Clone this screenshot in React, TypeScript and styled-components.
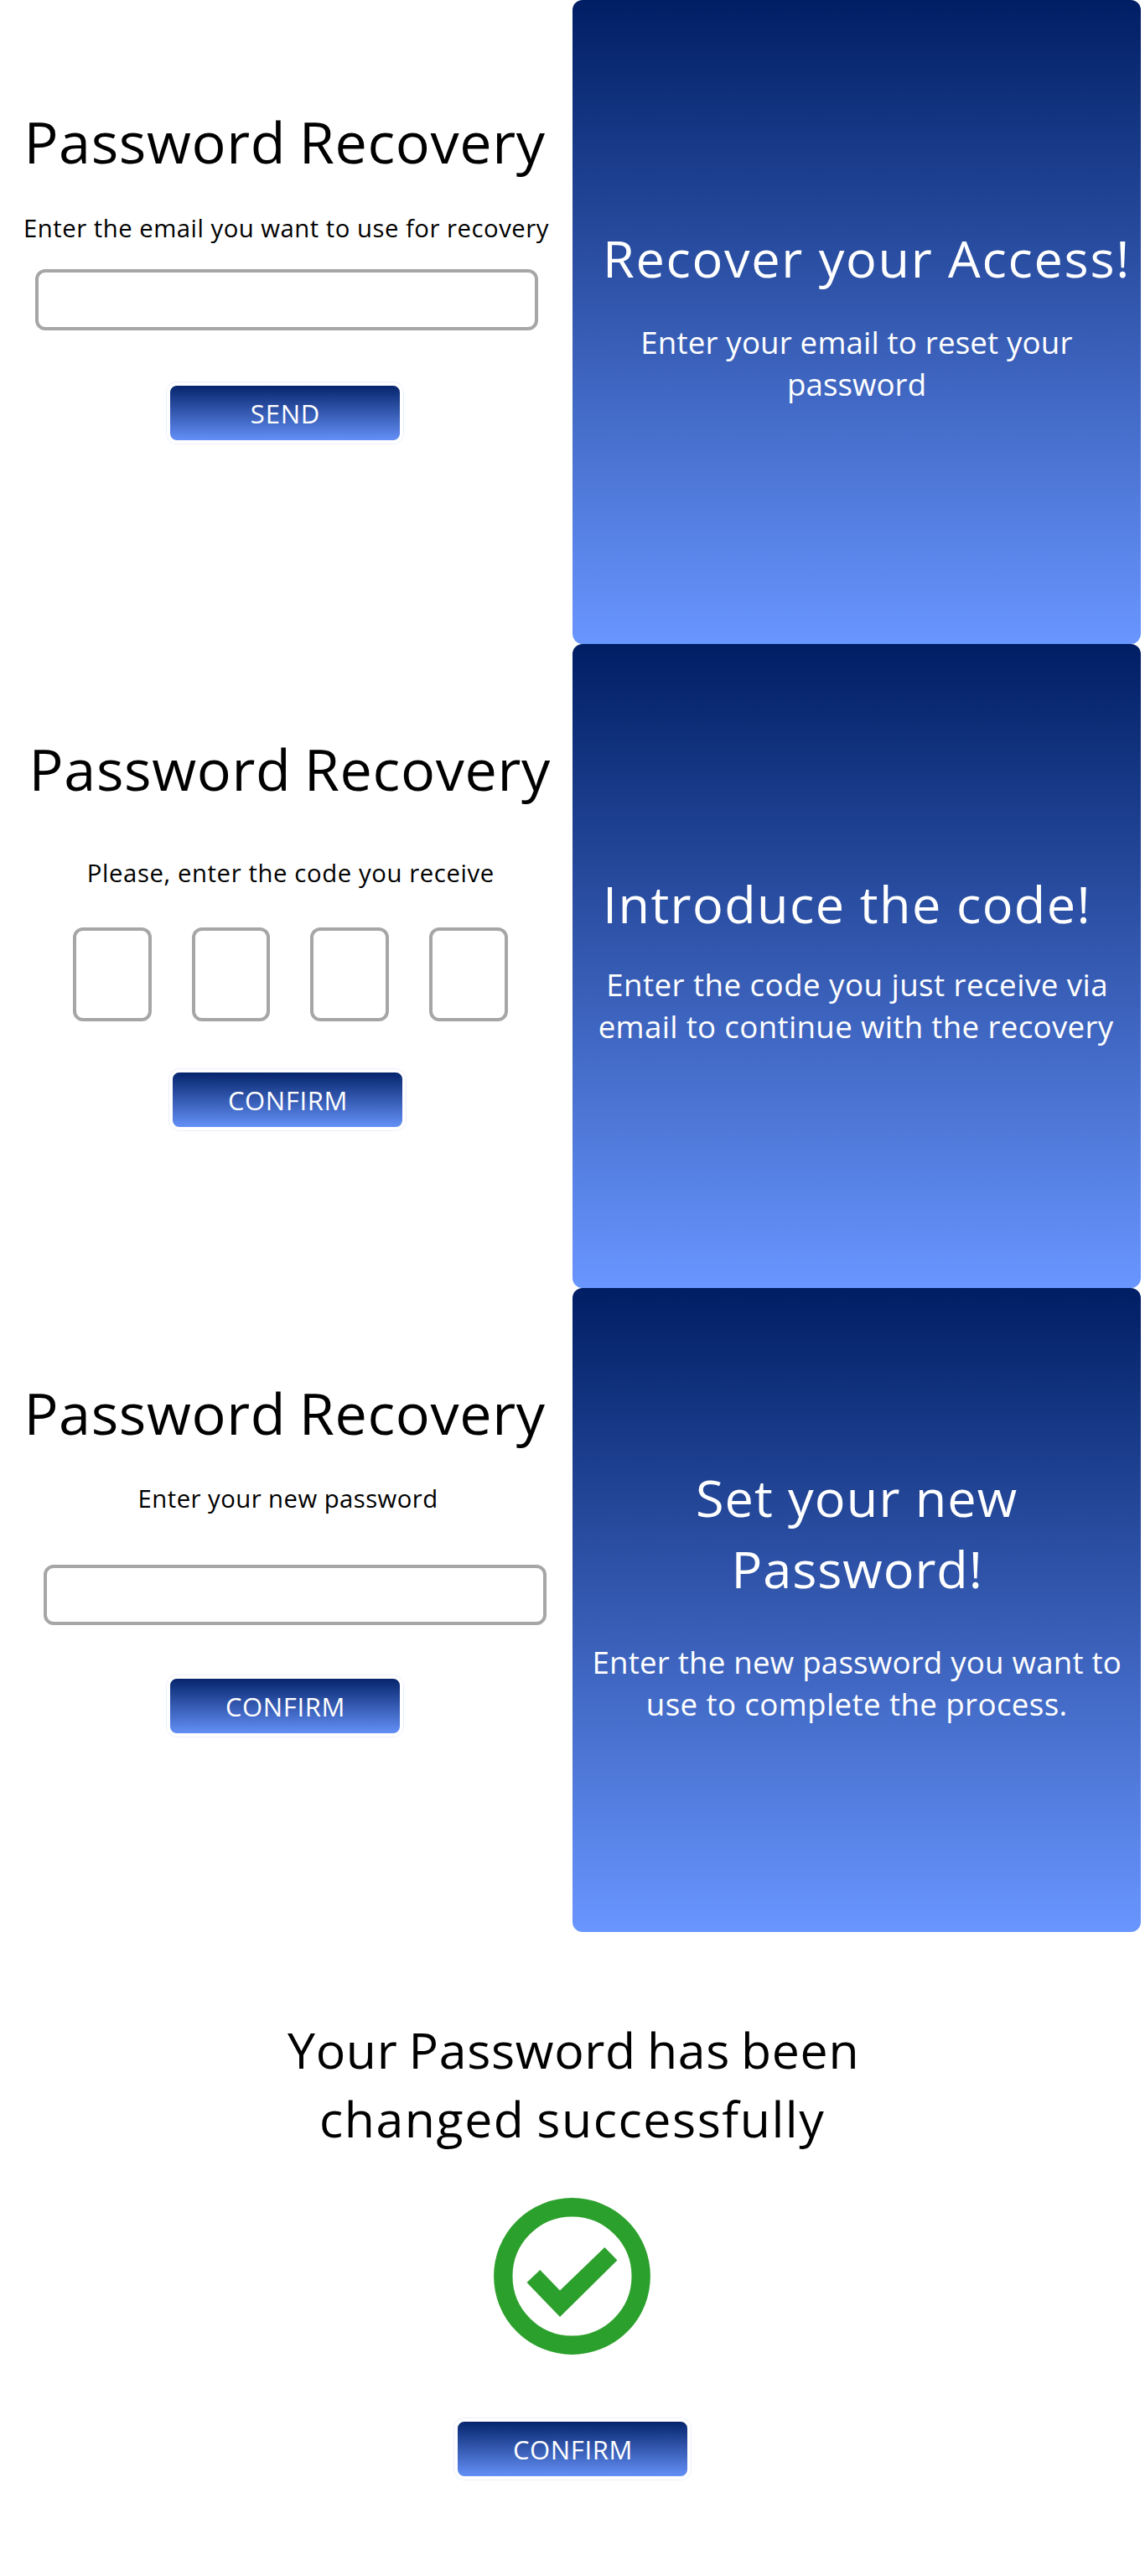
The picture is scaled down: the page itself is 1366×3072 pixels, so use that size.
import React from "react";
import styled, { createGlobalStyle } from "styled-components";

const GlobalStyle = createGlobalStyle`
  body {
    margin: 0;
    background: #fff;
    font-family: "Open Sans", "Noto Sans", sans-serif;
  }
  *, *::before, *::after {
    box-sizing: border-box;
  }
`;

const gradient = "linear-gradient(180deg, #001e64 0%, #6996ff 100%)";

const Page = styled.main`
  width: 1366px;
  height: 3072px;
  overflow: hidden;
`;

const Screen = styled.section`
  display: grid;
  grid-template-columns: 683px 678px;
  height: 768px;
`;

const Column = styled.div<{ $top: number }>`
  display: flex;
  flex-direction: column;
  align-items: flex-start;
  padding-top: ${(p) => p.$top}px;
`;

const Banner = styled(Column)`
  color: #fff;
  background: ${gradient};
  border-radius: 12px;
`;

const Final = styled(Column)`
  height: 768px;
`;

interface TextProps {
  $left: number;
  $track: number;
  $gap?: number;
}

const Text = styled.span<TextProps>`
  display: block;
  white-space: pre;
  margin-top: ${(p) => p.$gap ?? 0}px;
  margin-left: ${(p) => p.$left}px;
  letter-spacing: ${(p) => p.$track}px;
`;

const Title = styled(Text)`
  font-size: 68.3px;
  line-height: 94px;
  word-spacing: -3px;
  color: #000;
`;

const BannerTitle = styled(Text)`
  font-size: 61.2px;
  line-height: 84.5px;
`;

const BannerText = styled(Text)`
  font-size: 36.7px;
  line-height: 50px;
`;

const FinalTitle = styled(Text)`
  font-size: 59px;
  line-height: 81.5px;
  word-spacing: -3px;
  color: #000;
`;

const Label = styled(Text)`
  font-size: 29.3px;
  line-height: 40px;
  color: #000;
`;

const Field = styled.input<{ $left: number; $gap: number }>`
  width: 600px;
  height: 72.5px;
  margin: ${(p) => p.$gap}px 0 0 ${(p) => p.$left}px;
  padding: 0 20px;
  border: 4px solid #a6a6a6;
  border-radius: 12px;
  background: #fff;
  font: inherit;
  font-size: 28px;
  outline: none;
`;

const CodeRow = styled.div`
  display: flex;
  gap: 48px;
  margin: 45px 0 0 87px;
`;

const CodeBox = styled.input`
  width: 93.7px;
  height: 112px;
  padding: 0;
  border: 4px solid #a6a6a6;
  border-radius: 12px;
  background: #fff;
  font: inherit;
  font-size: 48px;
  text-align: center;
  outline: none;
`;

const Button = styled.button<{ $left: number; $gap: number; $track: number }>`
  display: flex;
  align-items: center;
  justify-content: center;
  width: 282px;
  height: 73px;
  margin: ${(p) => p.$gap}px 0 0 ${(p) => p.$left}px;
  padding: 2px 0 0 1px;
  border: 4px solid #fff;
  border-radius: 12px;
  background: ${gradient} border-box;
  box-shadow: 0 0 0 0.75px rgba(84, 124, 220, 0.16);
  color: #fff;
  font: inherit;
  font-size: 31px;
  line-height: 43px;
  letter-spacing: ${(p) => p.$track}px;
`;

const SuccessIcon = styled.svg`
  display: block;
  width: 187px;
  height: 187px;
  margin: 53.5px 0 0 589.2px;
`;

export default function App() {
  return (
    <Page>
      <GlobalStyle />

      <Screen>
        <Column $top={122}>
          <Title $left={28.4} $track={0.63}>Password Recovery</Title>
          <Label $left={28} $gap={36} $track={0.5}>
            Enter the email you want to use for recovery
          </Label>
          <Field $left={41.5} $gap={29} aria-label="Email" />
          <Button $left={199} $gap={62.5} $track={0.8}>SEND</Button>
        </Column>
        <Banner $top={266}>
          <BannerTitle $left={36} $track={1.7}>Recover your Access!</BannerTitle>
          <BannerText $left={81.3} $gap={32.6} $track={0.16}>Enter your email to reset your</BannerText>
          <BannerText $left={256} $track={0.05}>password</BannerText>
        </Banner>
      </Screen>

      <Screen>
        <Column $top={102}>
          <Title $left={34.6} $track={0.63}>Password Recovery</Title>
          <Label $left={103.8} $gap={57} $track={0.6}>Please, enter the code you receive</Label>
          <CodeRow>
            {[1, 2, 3, 4].map((n) => (
              <CodeBox key={n} maxLength={1} aria-label={`Digit ${n}`} />
            ))}
          </CodeRow>
          <Button $left={202} $gap={57} $track={0.65}>CONFIRM</Button>
        </Column>
        <Banner $top={267.8}>
          <BannerTitle $left={36} $track={1.4}>Introduce the code!</BannerTitle>
          <BannerText $left={40.2} $gap={28.5} $track={0.46}>Enter the code you just receive via</BannerText>
          <BannerText $left={30.7} $track={0.33}>email to continue with the recovery</BannerText>
        </Banner>
      </Screen>

      <Screen>
        <Column $top={101.5}>
          <Title $left={28.4} $track={0.63}>Password Recovery</Title>
          <Label $left={164.6} $gap={35.5} $track={0.45}>Enter your new password</Label>
          <Field type="password" $left={51.6} $gap={58.5} aria-label="New password" />
          <Button $left={199} $gap={60} $track={0.65}>CONFIRM</Button>
        </Column>
        <Banner $top={208}>
          <BannerTitle $left={146.9} $track={1.14}>Set your new</BannerTitle>
          <BannerTitle $left={189.5} $track={0.93}>Password!</BannerTitle>
          <BannerText $left={23.5} $gap={43.8} $track={0.2}>Enter the new password you want to</BannerText>
          <BannerText $left={87.8} $track={0.39}>use to complete the process.</BannerText>
        </Banner>
      </Screen>

      <Final $top={100}>
        <FinalTitle $left={343} $track={0.68}>Your Password has been</FinalTitle>
        <FinalTitle $left={381} $track={1.54}>changed successfully</FinalTitle>
        <SuccessIcon viewBox="0 0 187 187" role="img" aria-label="Success">
          <circle cx="93.5" cy="93.5" r="82.2" fill="none" stroke="#2ca02c" strokeWidth="22.4" />
          <path d="M39.5 101 55.3 86 79 110.5 132.4 59 147.4 74.4 79 142Z" fill="#2ca02c" />
        </SuccessIcon>
        <Button $left={542} $gap={76.5} $track={0.65}>CONFIRM</Button>
      </Final>
    </Page>
  );
}
